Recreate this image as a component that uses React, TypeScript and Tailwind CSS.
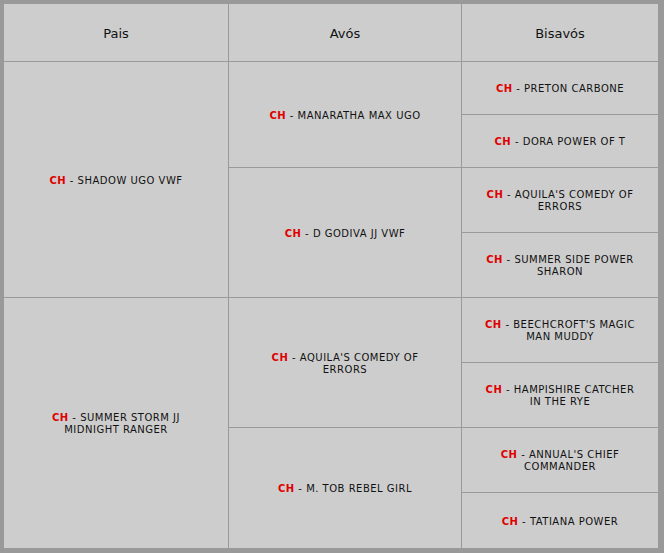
const Dog = ({ name }: { name: string }) => (
  <div className="flex items-center justify-center h-full bg-[#cdcdcd] px-5 pt-[2px] text-center text-[10px] leading-[12px] tracking-[0.5px] text-[#111]">
    <span>
      <b className="text-[#e00000]">CH</b> - {name}
    </span>
  </div>
);

const Head = ({ text }: { text: string }) => (
  <div className="flex items-center justify-center pt-[2px] bg-[#cdcdcd] text-[13px] text-[#111]">{text}</div>
);

export default function App() {
  return (
    <div className="w-[664px] h-[553px] bg-[#999] pt-[4px] pl-[4px] font-['DejaVu_Sans',Verdana,sans-serif]">
      <div className="grid grid-cols-[224px_232px_196px] grid-rows-[57px_52px_52px_64px_64px_64px_64px_64px_55px] gap-px w-[654px] bg-[#9a9a9a]">
        <Head text="Pais" />
        <Head text="Avós" />
        <Head text="Bisavós" />

        <div className="row-span-4">
          <Dog name="SHADOW UGO VWF" />
        </div>
        <div className="row-span-2">
          <Dog name="MANARATHA MAX UGO" />
        </div>
        <Dog name="PRETON CARBONE" />
        <Dog name="DORA POWER OF T" />
        <div className="row-span-2">
          <Dog name="D GODIVA JJ VWF" />
        </div>
        <Dog name="AQUILA'S COMEDY OF ERRORS" />
        <Dog name="SUMMER SIDE POWER SHARON" />

        <div className="row-span-4">
          <Dog name="SUMMER STORM JJ MIDNIGHT RANGER" />
        </div>
        <div className="row-span-2">
          <Dog name="AQUILA'S COMEDY OF ERRORS" />
        </div>
        <Dog name="BEECHCROFT'S MAGIC MAN MUDDY" />
        <Dog name="HAMPISHIRE CATCHER IN THE RYE" />
        <div className="row-span-2">
          <Dog name="M. TOB REBEL GIRL" />
        </div>
        <Dog name="ANNUAL'S CHIEF COMMANDER" />
        <Dog name="TATIANA POWER" />
      </div>
    </div>
  );
}
